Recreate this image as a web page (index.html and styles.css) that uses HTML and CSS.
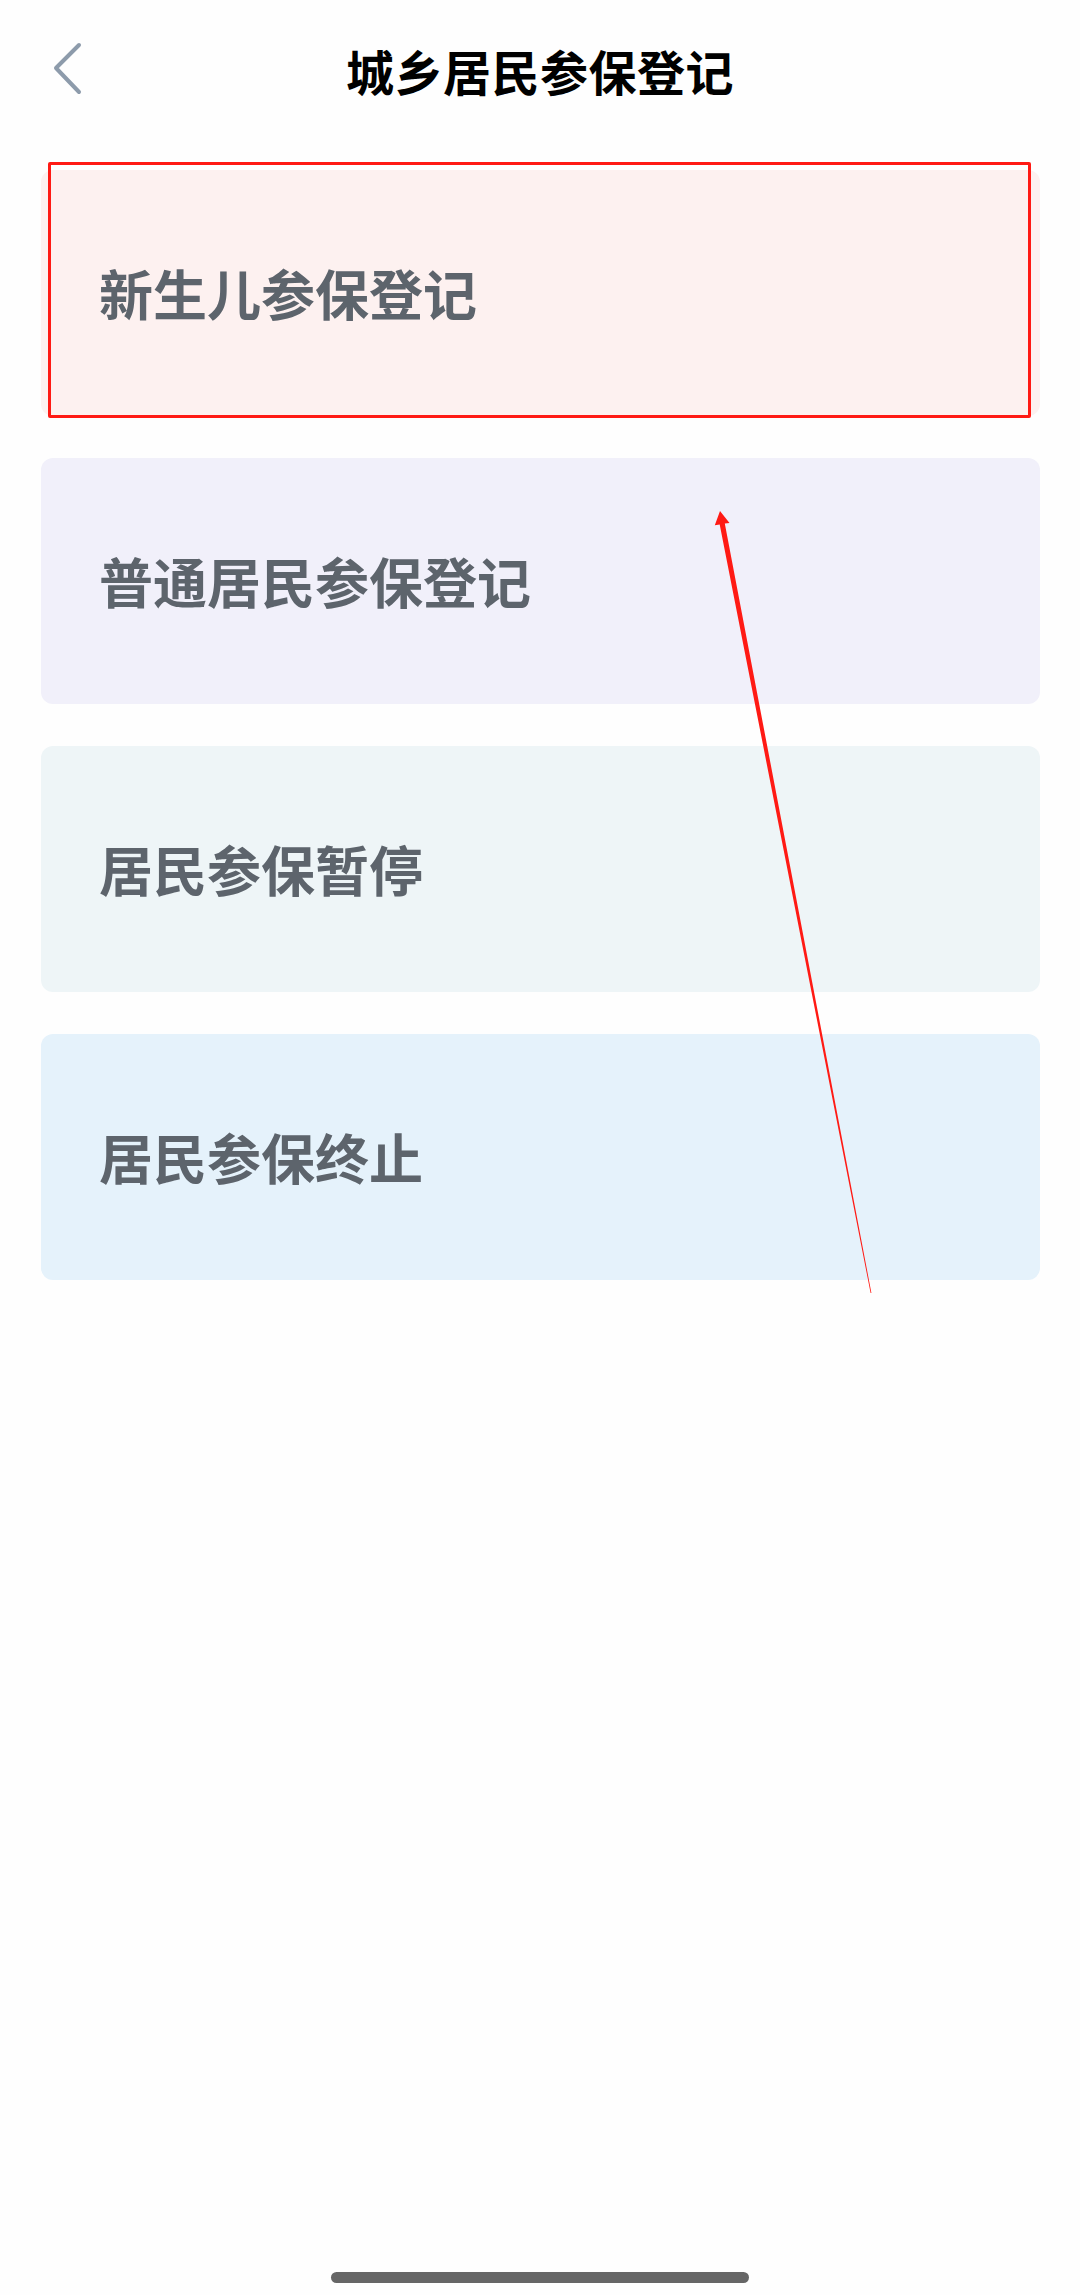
FILE: index.html
```html
<!DOCTYPE html>
<html lang="zh-CN">
<head>
<meta charset="utf-8">
<title>城乡居民参保登记</title>
<link rel="stylesheet" href="styles.css">
</head>
<body>
<div class="page">
  <header class="topbar">
    <div class="back">
      <svg width="36" height="56" viewBox="0 0 36 56"><polyline points="29,4 6,27 29,51" fill="none" stroke="#8d9bab" stroke-width="4" stroke-linecap="round" stroke-linejoin="round"/></svg>
    </div>
    <h1 class="title">城乡居民参保登记</h1>
    <div class="side"></div>
  </header>
  <main class="list">
    <div class="card card-pink">新生儿参保登记</div>
    <div class="card card-lavender">普通居民参保登记</div>
    <div class="card card-teal">居民参保暂停</div>
    <div class="card card-blue">居民参保终止</div>
  </main>
  <div class="home-bar"></div>
  <div class="mark-box"></div>
  <svg class="mark-arrow" width="1080" height="2295" viewBox="0 0 1080 2295">
    <polygon fill="#ff1a14" points="720,511 729.5,523 724.8,523.4 871.4,1293 870.6,1293 719.7,524.4 714.8,525.3"/>
  </svg>
</div>
</body>
</html>
```
FILE: styles.css
```css
html, body {
  margin: 0;
  padding: 0;
  background: #fefefe;
}
.page {
  position: relative;
  width: 1080px;
  min-height: 2295px;
  display: flex;
  flex-direction: column;
  font-family: "Noto Sans CJK SC", "Noto Sans", sans-serif;
}
.topbar {
  height: 140px;
  display: grid;
  grid-template-columns: 1fr auto 1fr;
  align-items: center;
}
.back {
  padding-left: 50px;
  display: flex;
  align-items: center;
  padding-bottom: 2px;
}
.back svg { display: block; }
.title {
  margin: 0;
  font-size: 48px;
  font-weight: 700;
  color: #000;
  line-height: 1;
  letter-spacing: 0.5px;
}
.list {
  display: flex;
  flex-direction: column;
  gap: 42px;
  padding: 30px 40px 0 41px;
}
.card {
  height: 246px;
  border-radius: 12px;
  display: flex;
  align-items: center;
  padding-left: 58px;
  font-size: 54px;
  font-weight: 700;
  color: #5d646c;
  line-height: 1;
}
.card-pink { background: #fdf1f0; }
.card-lavender { background: #f1f0fa; }
.card-teal { background: #eef5f7; }
.card-blue { background: #e5f2fb; }
.home-bar {
  margin-top: auto;
  margin-bottom: 12px;
  align-self: center;
  width: 418px;
  height: 11px;
  border-radius: 6px;
  background: #666;
}
.mark-box {
  position: absolute;
  left: 48px;
  top: 162px;
  width: 977px;
  height: 250px;
  border: 3px solid #ff1a14;
  border-radius: 2px;
  pointer-events: none;
}
.mark-arrow {
  position: absolute;
  left: 0;
  top: 0;
  pointer-events: none;
}
```
